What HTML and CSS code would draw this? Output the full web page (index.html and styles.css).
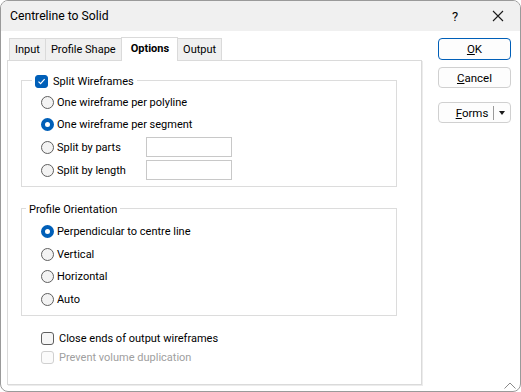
FILE: index.html
```html
<!DOCTYPE html>
<html lang="en">
<head>
    <meta charset="UTF-8">
    <title>Centreline to Solid</title>
    <link rel="stylesheet" href="styles.css">
</head>
<body>
    <div class="window">
        <div class="titlebar">
            <span class="title">Centreline to Solid</span>
            <span class="help">?</span>
            <span class="close">
                <svg width="12" height="12" viewBox="0 0 12 12"><path d="M1 1 L11 11 M11 1 L1 11" stroke="#1a1a1a" stroke-width="1.1" fill="none"/></svg>
            </span>
        </div>

        <div class="content">
            <div class="main">
                <div class="tabs">
                    <div class="tab">Input</div>
                    <div class="tab">Profile Shape</div>
                    <div class="tab active">Options</div>
                    <div class="tab">Output</div>
                </div>

                <div class="panel">
                    <div class="group group-split">
                        <div class="group-title">
                            <span class="check checked">
                                <svg width="9" height="9" viewBox="0 0 9 9"><path d="M1.5 4.6 L3.6 6.6 L7.6 2.2" stroke="#fff" stroke-width="1.2" fill="none"/></svg>
                            </span>
                            Split Wireframes
                        </div>
                        <div class="items">
                            <div class="row"><span class="radio"></span>One wireframe per polyline</div>
                            <div class="row"><span class="radio on"></span>One wireframe per segment</div>
                            <div class="row">
                                <span class="label"><span class="radio"></span>Split by parts</span>
                                <input type="text" class="field">
                            </div>
                            <div class="row">
                                <span class="label"><span class="radio"></span>Split by length</span>
                                <input type="text" class="field">
                            </div>
                        </div>
                    </div>

                    <div class="group group-orient">
                        <div class="group-title">Profile Orientation</div>
                        <div class="items">
                            <div class="row"><span class="radio on"></span>Perpendicular to centre line</div>
                            <div class="row"><span class="radio"></span>Vertical</div>
                            <div class="row"><span class="radio"></span>Horizontal</div>
                            <div class="row"><span class="radio"></span>Auto</div>
                        </div>
                    </div>

                    <div class="options">
                        <div class="opt"><span class="check"></span>Close ends of output wireframes</div>
                        <div class="opt disabled"><span class="check"></span>Prevent volume duplication</div>
                    </div>
                </div>
            </div>

            <div class="side">
                <button class="btn default"><u>O</u>K</button>
                <button class="btn"><u>C</u>ancel</button>
                <button class="btn split">
                    <span class="split-text"><u>F</u>orms</span>
                    <span class="split-sep"></span>
                    <span class="split-arrow"></span>
                </button>
            </div>
        </div>

        <svg class="grip" width="12" height="7" viewBox="0 0 12 7"><path d="M0.5 6.5 L6 1 L11.5 6.5" stroke="#8a8a8a" stroke-width="1" fill="none"/></svg>
    </div>
</body>
</html>
```

FILE: styles.css
```css
* {
    box-sizing: border-box;
}
body {
    margin: 0;
    font-family: Roboto, "Noto Sans", sans-serif;
    font-size: 11px;
    color: #000;
    background: #fff;
}
.window {
    position: relative;
    width: 521px;
    height: 392px;
    border: 1px solid #9a9a9a;
    border-radius: 8px;
    background: #fff;
    overflow: hidden;
}
.titlebar {
    height: 30px;
    background: #f0f0f0;
    display: flex;
    align-items: center;
    padding-left: 9px;
}
.title {
    flex: 1;
    font-size: 12.2px;
}
.help {
    width: 20px;
    margin-right: 20px;
    font-size: 13px;
}
.close {
    width: 24px;
    margin-right: 4px;
    display: flex;
    align-items: center;
}

.content {
    display: flex;
    padding: 6px 0 0 6px;
}
.main {
    width: 415px;
}
.tabs {
    display: flex;
    align-items: flex-end;
    padding-left: 2px;
    height: 23px;
}
.tab {
    height: 22px;
    line-height: 21px;
    padding: 0 5px;
    border: 1px solid #dadada;
    border-bottom: none;
    margin-right: -1px;
    background: #f0f0f0;
}
.tab.active {
    height: 24px;
    line-height: 22px;
    margin-bottom: -1px;
    padding: 0 8px 0 9px;
    background: #fff;
    font-weight: bold;
    position: relative;
    z-index: 1;
}
.panel {
    height: 325px;
    border: 1px solid #dadada;
    box-shadow: 1px 1px 0 #ececec;
    padding: 13px 24px 0 13px;
}

.group {
    border: 1px solid #dcdcdc;
}
.group-title {
    display: flex;
    align-items: center;
    width: fit-content;
    height: 16px;
    margin-top: -8px;
    padding: 0 3px;
    background: #fff;
}
.group-split {
    margin-top: 6px;
}
.group-split .group-title {
    margin-left: 10px;
}
.group-split .items {
    padding: 2px 0 5px 19px;
}
.group-orient {
    margin-top: 21px;
}
.group-orient .group-title {
    margin-left: 4px;
}
.group-orient .items {
    padding: 3px 0 4px 19px;
}
.row {
    display: flex;
    align-items: center;
    height: 22.6px;
}
.label {
    display: flex;
    align-items: center;
    width: 105px;
}
.field {
    width: 86px;
    height: 20px;
    border: 1px solid #c8c8c8;
    font: inherit;
    padding: 0 3px;
}
.radio {
    width: 13px;
    height: 13px;
    border: 1px solid #5f5f5f;
    border-radius: 50%;
    background: #f3f3f3;
    margin-right: 3px;
    flex-shrink: 0;
}
.radio.on {
    border: 4px solid #005fb8;
    background: #fff;
}
.check {
    width: 13px;
    height: 13px;
    border: 1px solid #5f5f5f;
    border-radius: 3px;
    background: #f6f6f6;
    margin-right: 5px;
    display: flex;
    align-items: center;
    justify-content: center;
    flex-shrink: 0;
}
.check.checked {
    background: #005fb8;
    border-color: #005fb8;
}

.options {
    margin-top: 13px;
    padding-left: 20px;
}
.opt {
    display: flex;
    align-items: center;
    height: 19px;
}
.opt.disabled {
    color: #a0a0a0;
}
.opt.disabled .check {
    border-color: #d0d0d0;
    background: #fbfbfb;
}

.side {
    display: flex;
    flex-direction: column;
    margin: 1px 0 0 16px;
    width: 73px;
}
.btn {
    height: 21px;
    border: 1px solid #d0d0d0;
    border-radius: 4px;
    background: #fdfdfd;
    font: inherit;
    font-size: 11.5px;
    color: #000;
    padding: 0;
    margin-bottom: 7px;
}
.btn.default {
    height: 22px;
    border-color: #005fb8;
}
.btn.split {
    margin-top: 7px;
    display: flex;
    align-items: center;
}
.split-text {
    flex: 1;
    padding-left: 12px;
    text-align: center;
}
.split-sep {
    width: 1px;
    height: 14px;
    background: #9a9a9a;
}
.split-arrow {
    width: 16px;
    display: flex;
    justify-content: center;
}
.split-arrow::after {
    content: "";
    border-left: 3.5px solid transparent;
    border-right: 3.5px solid transparent;
    border-top: 4px solid #1a1a1a;
}
.grip {
    position: absolute;
    right: 4px;
    bottom: 2px;
}
```
